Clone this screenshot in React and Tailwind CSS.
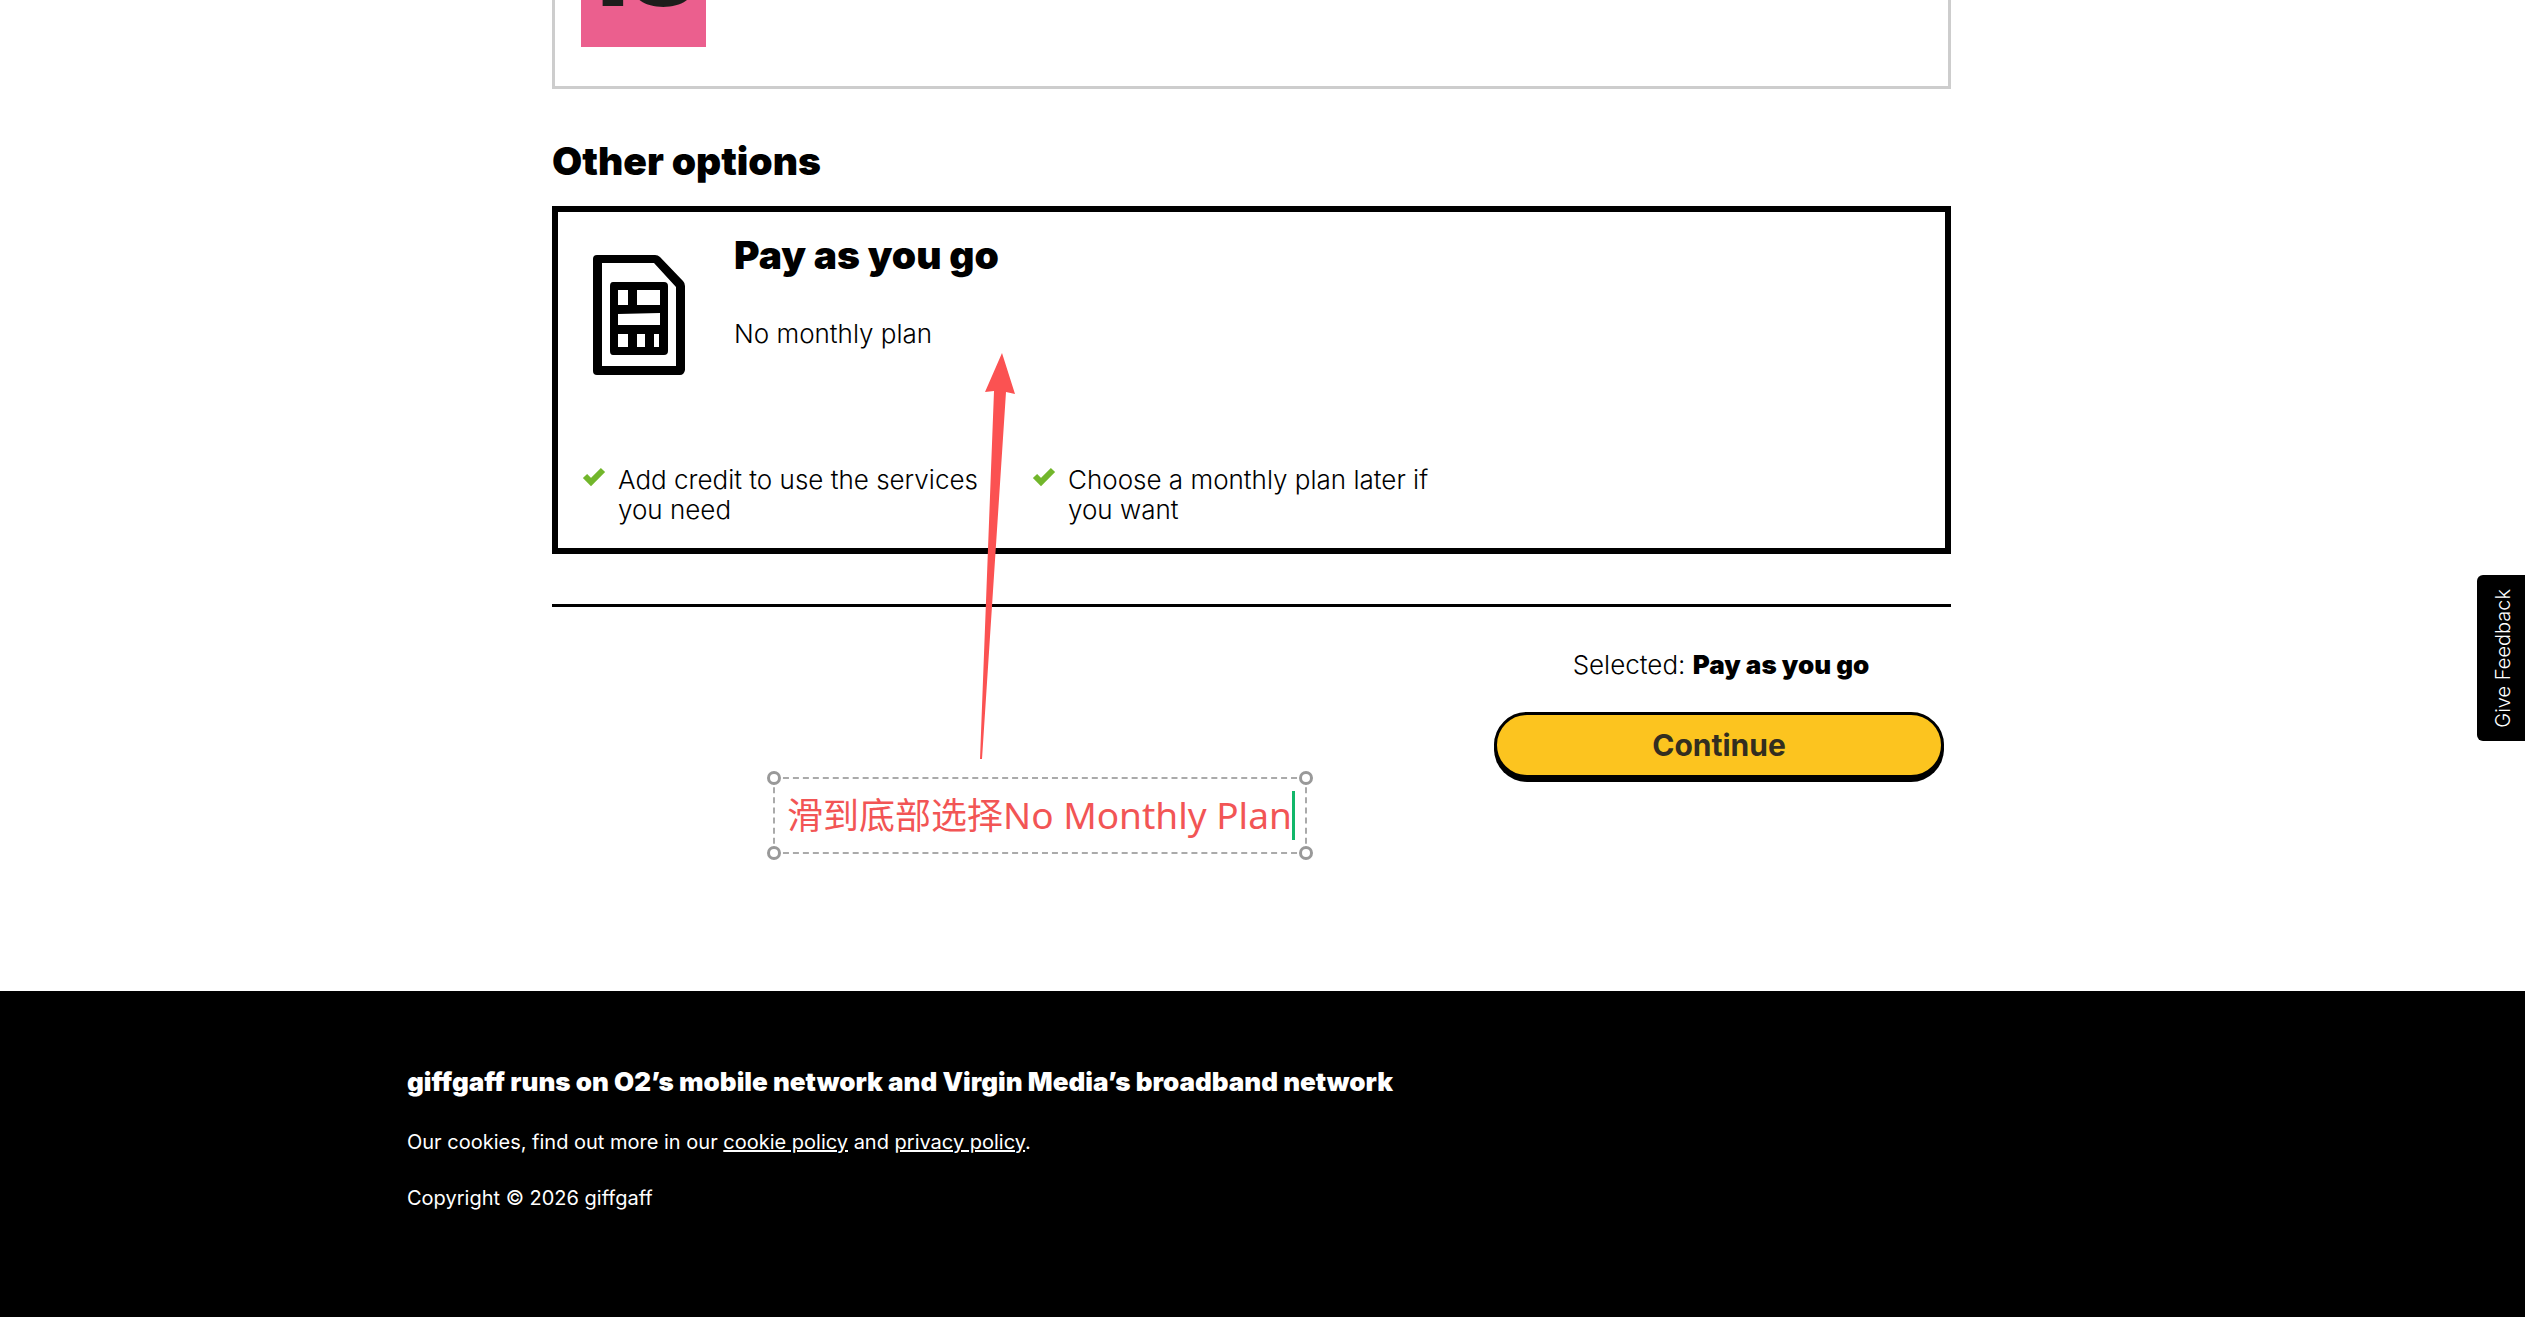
import React from 'react';

const PERKS = [
    'Add credit to use the services you need',
    'Choose a monthly plan later if you want',
];

function SimIcon() {
    return (
        <svg viewBox="0 0 94 122" className="h-[122px] w-[94px] shrink-0" aria-hidden="true">
            <path
                fill="#000"
                fillRule="evenodd"
                d="M5 1H63Q66 1 68 3L91 27Q93 29 93 32V116Q92 121 88 121H5Q1 121 1 117V5Q1 1 5 1ZM10 9V112H84V33L62 9Z"
            />
            <path
                fill="#000"
                fillRule="evenodd"
                d="M21 28H72Q76 28 76 32V97Q76 101 72 101H21Q18 101 18 97V32Q18 28 21 28ZM26 36V51H36V36ZM45 36V51H68V36ZM26 60V71H68V59ZM26 80V93H36V80ZM45 80V93H53V80ZM62 80V93H67V80Z"
            />
        </svg>
    );
}

function Tick() {
    return (
        <svg viewBox="0 0 24 20" className="mt-0.5 h-5 w-6 shrink-0" aria-hidden="true">
            <path fill="none" stroke="#72b62b" strokeWidth="6" d="M3 9L9 15L21 3" />
        </svg>
    );
}

function PlanCard() {
    return (
        <button type="button" className="block w-full border-6 border-black px-6 pt-[19px] pb-[23px] text-left">
            <span className="flex items-start gap-12 pl-[10px]">
                <span className="pt-[23px]">
                    <SimIcon />
                </span>
                <span className="flex flex-col gap-10">
                    <span className="text-[39px] leading-12 font-black">Pay as you go</span>
                    <span className="text-[26px] leading-[30px] font-light">No monthly plan</span>
                </span>
            </span>
            <span className="mt-[89px] flex gap-6">
                {PERKS.map((perk) => (
                    <span key={perk} className="flex w-[426px] gap-3">
                        <Tick />
                        <span className="text-[26px] leading-[30px] font-light">{perk}</span>
                    </span>
                ))}
            </span>
        </button>
    );
}

function Handle({ className }) {
    return <span className={`absolute h-3.5 w-3.5 rounded-full border-3 border-[#999] bg-white ${className}`} />;
}

function Annotation() {
    return (
        <>
            <svg
                viewBox="0 0 36 408"
                className="pointer-events-none absolute top-[353px] left-[428px] h-[408px] w-9"
                aria-hidden="true"
            >
                <path fill="#fb5252" d="M22 0L35 41L26 39L2 406H0L14 38L5 39Z" />
            </svg>
            <div className="absolute top-[777px] left-[221px] flex items-center border-2 border-dashed border-[#aaa] py-3 pr-2.5 pl-3">
                <Handle className="-top-2 -left-2" />
                <Handle className="-top-2 -right-2" />
                <Handle className="-bottom-2 -left-2" />
                <Handle className="-right-2 -bottom-2" />
                <span className="border-r-3 border-[#12b76a] font-['Noto_Sans','Noto_Sans_CJK_SC',sans-serif] text-[37px] leading-12 whitespace-nowrap text-[#f25555]">
                    <span className="text-[36px]">滑到底部选择</span>No Monthly Plan
                </span>
            </div>
        </>
    );
}

export default function App() {
    return (
        <div className="relative flex min-h-screen flex-col overflow-hidden bg-white font-['Inter',sans-serif] text-black">
            <main className="pr-[22px]">
                <div className="relative mx-auto max-w-[1399px]">
                    <section className="h-[89px] border-3 border-t-0 border-[#cdcdcd] px-[26px]">
                        <div className="relative h-[47px] w-[125px] overflow-hidden bg-[#eb5f8e]">
                            <span className="absolute bottom-[27px] left-0 text-[104px] leading-none font-black text-[#1d1d1b]">
                                18
                            </span>
                        </div>
                    </section>
                    <h2 className="mt-12 text-[39px] leading-12 font-black">Other options</h2>
                    <div className="mt-[21px]">
                        <PlanCard />
                    </div>
                    <hr className="mt-[50px] border-t-3 border-black" />
                    <div className="mt-[43px] mr-[7px] ml-auto w-[450px]">
                        <p className="pl-1 text-center text-[26px] leading-[30px] font-light">
                            Selected: <strong className="font-black">Pay as you go</strong>
                        </p>
                        <button
                            type="button"
                            className="mt-8 block h-[66px] w-full rounded-full border-3 border-black bg-[#fcc41f] text-[30px] font-bold text-[#332e20] shadow-[0_4px_0_#000]"
                        >
                            Continue
                        </button>
                    </div>
                    <Annotation />
                </div>
            </main>
            <button
                type="button"
                className="absolute top-[575px] right-0 h-[166px] w-12 rounded-l-md bg-black pt-2 pl-1 text-[20px] font-light text-white"
            >
                <span className="inline-block rotate-180 [writing-mode:vertical-rl]">Give Feedback</span>
            </button>
            <footer className="mt-[213px] grow bg-black pr-[22px] text-white">
                <div className="mx-auto flex max-w-[1689px] flex-col items-start gap-7 pt-[73px] pb-[103px]">
                    <h3 className="text-[26px] leading-9 font-black">
                        giffgaff runs on O2’s mobile network and Virgin Media’s broadband network
                    </h3>
                    <p className="text-[20px] leading-7">
                        Our cookies, find out more in our <a href="#cookies" className="underline">cookie policy</a> and{' '}
                        <a href="#privacy" className="underline">privacy policy</a>.
                    </p>
                    <p className="text-[20px] leading-7">Copyright © 2026 giffgaff</p>
                </div>
            </footer>
        </div>
    );
}
